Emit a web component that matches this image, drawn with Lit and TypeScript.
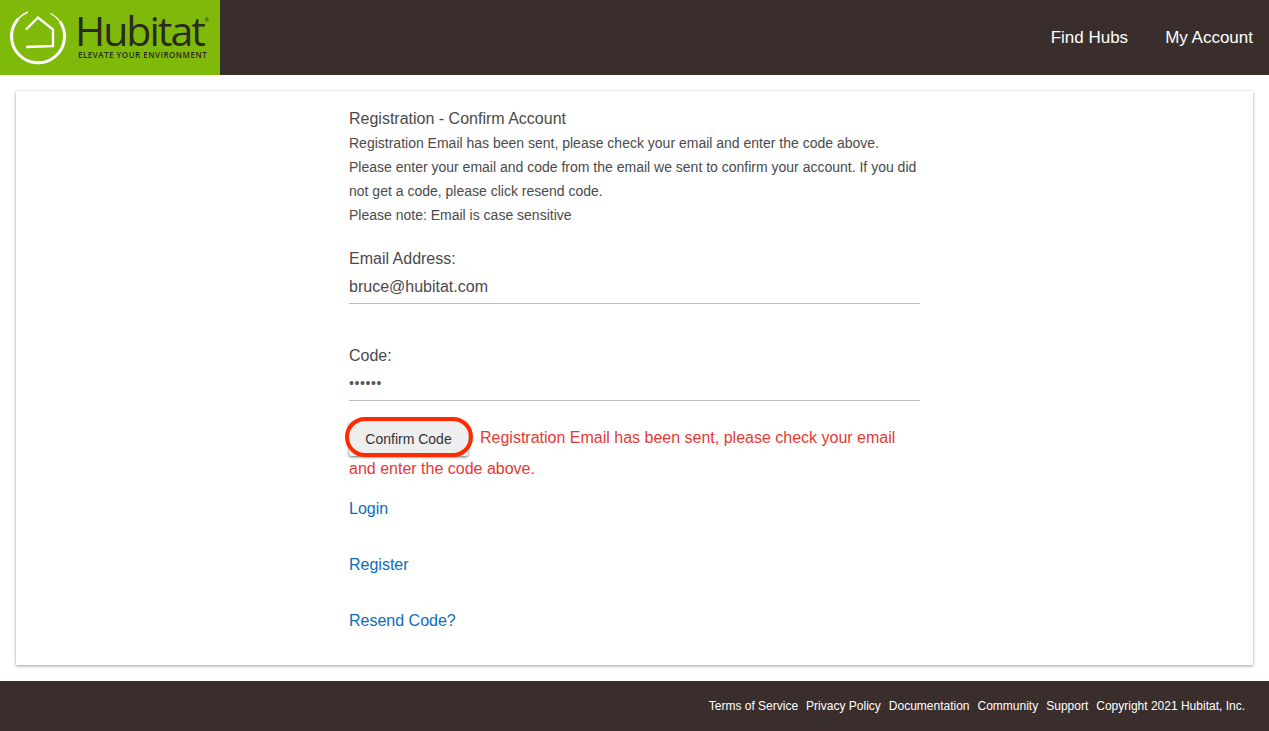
import { LitElement, html, css } from "lit";
import { customElement } from "lit/decorators.js";

@customElement("app-root")
export class AppRoot extends LitElement {
  static styles = css`
    :host { display: block; height: 731px; overflow: hidden; background: #fff; font-family: "Liberation Sans", Arial, sans-serif; color: #4a4a4a; }
    .top { height: 75px; background: #3a2e2c; display: flex; align-items: center; justify-content: space-between; }
    .logo { width: 220px; height: 75px; background: #7fba0a; display: flex; flex: none; }
    .logo svg { width: 60px; height: 60px; margin: 7px 0 0 8px; flex: none; }
    .brand { margin-left: 10px; display: flex; flex-direction: column; color: #2a2a20; }
    .word { font-family: "Open Sans", sans-serif; font-size: 41px; line-height: 42px; letter-spacing: -2px; margin: 9px 0 0 -3px; display: flex; align-items: flex-start; }
    .word sup { font-size: 5px; line-height: 5px; margin: 9px 0 0 1px; letter-spacing: 0; }
    .tag { font-family: "Open Sans", sans-serif; font-size: 8px; line-height: 8px; font-weight: 600; letter-spacing: .5px; white-space: nowrap; }
    nav { display: flex; gap: 37px; padding-right: 16px; }
    nav a { color: #fff; font-size: 17px; }
    .card { margin: 16px 16px 0; height: 574px; background: #fff; box-shadow: 0 1px 3px rgba(0,0,0,.4); box-sizing: border-box; padding-top: 17px; }
    .col { width: 571px; margin-left: 333px; }
    h1 { font-size: 16px; font-weight: 400; margin: 0; line-height: 22px; }
    p { margin: 1px 0 0; font-size: 14px; line-height: 24px; }
    p + p { margin-top: 0; }
    .field { font-size: 16px; }
    .field label { display: block; line-height: 24px; }
    .val { line-height: 32px; border-bottom: 1px solid #bdbdbd; box-sizing: border-box; height: 33px; }
    .f1 { margin-top: 20px; }
    .f2 { margin-top: 40px; }
    .dots { font-size: 14px; line-height: 30px; letter-spacing: .6px; color: #5a5a5a; }
    .msg { margin-top: 21px; position: relative; line-height: 31px; font-size: 16px; color: #e53935; }
    button { all: unset; display: inline-block; box-sizing: border-box; width: 119px; height: 34px; margin: -4px 12px -4px 0; text-align: center; font-size: 14px; line-height: 34px; color: #333; background: #eee; border-radius: 2px; box-shadow: 0 1px 3px rgba(0,0,0,.6); vertical-align: middle; }
    .ring { position: absolute; left: -4px; top: -5px; width: 128px; height: 40px; box-sizing: border-box; border: 4px solid #ff2a00; border-radius: 20px; }
    .links { margin-top: 13px; display: flex; flex-direction: column; gap: 32px; font-size: 16px; line-height: 24px; }
    .links a { color: #0a6ebd; }
    .foot { margin-top: 16px; height: 50px; background: #3a2e2c; display: flex; justify-content: flex-end; align-items: center; gap: 8px; padding-right: 24px; color: #fff; font-size: 12px; }
  `;
  render() {
    return html`
      <div class="top">
        <div class="logo">
          <svg viewBox="8 7 60 60" fill="none" stroke="#fff">
            <path d="M60 21.5 A26.5 26.5 0 1 1 18 19" stroke-width="3"/>
            <path d="M18 19 A26.5 26.5 0 0 1 28 12" stroke-width="1.8"/>
            <path d="M50.5 13.5 A26.5 26.5 0 0 1 60 21.5" stroke-width="1.2"/>
            <path d="M26 29.5 L38 17.5 L53 29.5 V46 L26 47" stroke-width="2.4"/>
          </svg>
          <div class="brand">
            <div class="word">Hubitat<sup>®</sup></div>
            <div class="tag">ELEVATE YOUR ENVIRONMENT</div>
          </div>
        </div>
        <nav><a>Find Hubs</a><a>My Account</a></nav>
      </div>
      <div class="card">
        <div class="col">
          <h1>Registration - Confirm Account</h1>
          <p>Registration Email has been sent, please check your email and enter the code above.</p>
          <p>Please enter your email and code from the email we sent to confirm your account. If you did not get a code, please click resend code.</p>
          <p>Please note: Email is case sensitive</p>
          <div class="field f1"><label>Email Address:</label><div class="val">bruce@hubitat.com</div></div>
          <div class="field f2"><label>Code:</label><div class="val dots">••••••</div></div>
          <div class="msg"><button>Confirm Code</button><span class="ring"></span>Registration Email has been sent, please check your email and enter the code above.</div>
          <div class="links"><a>Login</a><a>Register</a><a>Resend Code?</a></div>
        </div>
      </div>
      <div class="foot"><span>Terms of Service</span><span>Privacy Policy</span><span>Documentation</span><span>Community</span><span>Support</span><span>Copyright 2021 Hubitat, Inc.</span></div>
    `;
  }
}
